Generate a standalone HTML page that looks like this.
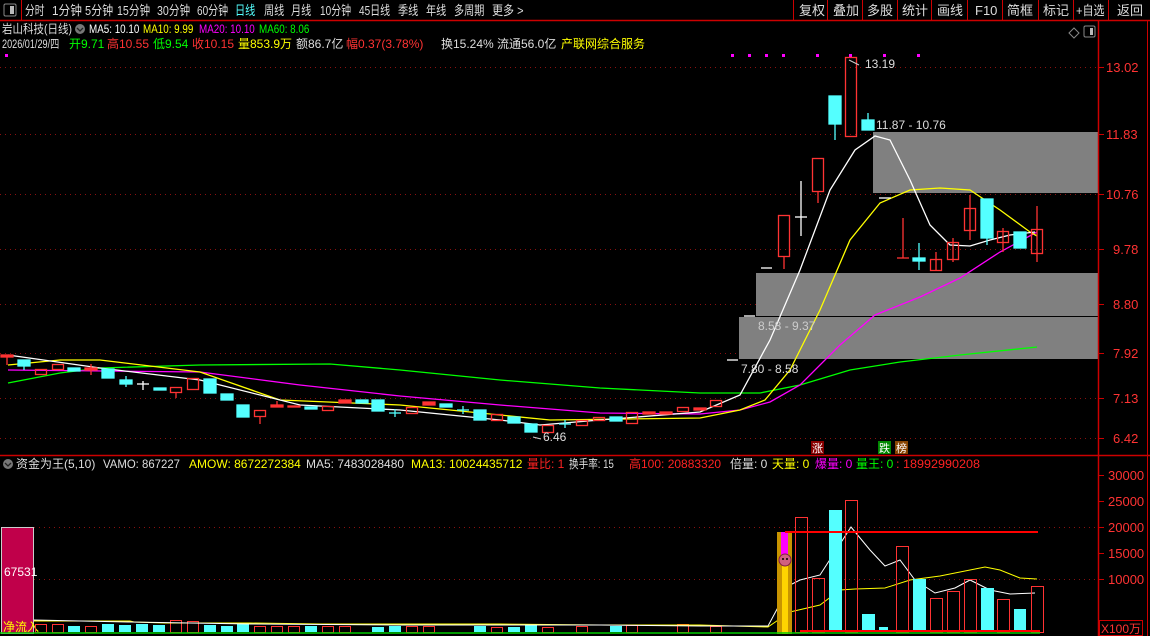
<!DOCTYPE html>
<html><head><meta charset="utf-8"><style>
body{margin:0;background:#000;width:1150px;height:636px;overflow:hidden;font-family:"Liberation Sans","Noto Sans CJK SC",sans-serif}
svg{position:absolute;left:0;top:0}
text{font-family:"Liberation Sans","Noto Sans CJK SC",sans-serif}
</style></head><body>
<svg width="1150" height="636" viewBox="0 0 1150 636">
<rect width="1150" height="636" fill="#000"/>
<!-- toolbar -->
<line x1="0" y1="20.5" x2="1150" y2="20.5" stroke="#c00" stroke-width="1.5"/>
<rect x="4" y="4" width="12" height="12" fill="none" stroke="#888" rx="1.5"/><rect x="10" y="6" width="4" height="8" fill="#bbb"/>
<line x1="21.5" y1="0" x2="21.5" y2="20" stroke="#c00"/>
<g font-size="13" fill="#ddd">
<text transform="translate(25,15) scale(.75,1)">分时</text>
<text transform="translate(52,15) scale(.9,1)">1分钟</text>
<text transform="translate(85,15) scale(.85,1)">5分钟</text>
<text transform="translate(117,15) scale(.82,1)">15分钟</text>
<text transform="translate(157,15) scale(.82,1)">30分钟</text>
<text transform="translate(197,15) scale(.77,1)">60分钟</text>
<text transform="translate(235,15) scale(.78,1)" fill="#5ff">日线</text>
<text transform="translate(264,15) scale(.78,1)">周线</text>
<text transform="translate(291,15) scale(.78,1)">月线</text>
<text transform="translate(320,15) scale(.77,1)">10分钟</text>
<text transform="translate(359,15) scale(.77,1)">45日线</text>
<text transform="translate(398,15) scale(.78,1)">季线</text>
<text transform="translate(426,15) scale(.78,1)">年线</text>
<text transform="translate(454,15) scale(.78,1)">多周期</text>
<text transform="translate(492,15) scale(.85,1)">更多 &gt;</text>
<text x="799" y="15">复权</text><text x="833" y="15">叠加</text><text x="867" y="15">多股</text><text x="902" y="15">统计</text><text x="937" y="15">画线</text><text x="975" y="15">F10</text><text x="1007" y="15">简框</text><text x="1043" y="15">标记</text><text transform="translate(1076,15) scale(.85,1)">+自选</text><text x="1117" y="15">返回</text>
</g>
<g stroke="#c00"><line x1="793.5" y1="0" x2="793.5" y2="20"/><line x1="827.5" y1="0" x2="827.5" y2="20"/><line x1="862.5" y1="0" x2="862.5" y2="20"/><line x1="897.5" y1="0" x2="897.5" y2="20"/><line x1="931.5" y1="0" x2="931.5" y2="20"/><line x1="967.5" y1="0" x2="967.5" y2="20"/><line x1="1002.5" y1="0" x2="1002.5" y2="20"/><line x1="1038.5" y1="0" x2="1038.5" y2="20"/><line x1="1073.5" y1="0" x2="1073.5" y2="20"/><line x1="1108.5" y1="0" x2="1108.5" y2="20"/></g>
<!-- info lines -->
<g font-size="12">
<text transform="translate(2,33) scale(.875,1)" fill="#ddd">岩山科技(日线)</text>
<circle cx="80" cy="29" r="5" fill="#777"/><path d="M77 28 l3 3 l3 -3" stroke="#222" fill="none" stroke-width="1.3"/>
<text transform="translate(89,33) scale(.82,1)" fill="#fff">MA5: 10.10</text>
<text transform="translate(143,33) scale(.82,1)" fill="#ff0">MA10: 9.99</text>
<text transform="translate(199,33) scale(.82,1)" fill="#f0f">MA20: 10.10</text>
<text transform="translate(259,33) scale(.82,1)" fill="#0f0">MA60: 8.06</text>
<text transform="translate(2,48) scale(.76,1)" fill="#ddd">2026/01/29/四</text>
<text x="69" y="48" fill="#0f0">开9.71</text><text x="107" y="48" fill="#f33">高10.55</text><text x="153" y="48" fill="#0f0">低9.54</text><text x="192" y="48" fill="#f33">收10.15</text><text x="238" y="48" fill="#ff0">量853.9万</text><text x="296" y="48" fill="#ddd">额86.7亿</text><text x="346" y="48" fill="#f33">幅0.37(3.78%)</text><text x="441" y="48" fill="#ddd">换15.24%</text><text x="497" y="48" fill="#ddd">流通56.0亿</text><text x="561" y="48" fill="#ff0">产联网综合服务</text>
</g>
<path d="M1069 33 l5 -5 l5 5 l-5 5z" fill="none" stroke="#888"/>
<rect x="1084" y="26" width="11" height="11" fill="none" stroke="#888" rx="1.5"/><rect x="1090" y="28" width="3" height="7" fill="#bbb"/>
<!-- magenta dots -->
<g fill="#f0f"><rect x="5" y="54" width="3" height="3"/><rect x="731" y="54" width="3" height="3"/><rect x="748" y="54" width="3" height="3"/><rect x="765" y="54" width="3" height="3"/><rect x="782" y="54" width="3" height="3"/><rect x="816" y="54" width="3" height="3"/><rect x="849" y="54" width="3" height="3"/><rect x="883" y="54" width="3" height="3"/><rect x="917" y="54" width="3" height="3"/></g>
<!-- gray boxes -->
<rect x="873" y="132" width="225" height="61" fill="#808080"/>
<rect x="756" y="273" width="342" height="43" fill="#808080"/>
<rect x="739" y="317" width="359" height="42" fill="#808080"/>
<line x1="739" y1="316.5" x2="1098" y2="316.5" stroke="#000"/>
<!-- grid -->
<g stroke="#8a1010" stroke-dasharray="1,4"><line x1="0" y1="67.5" x2="1098" y2="67.5"/><line x1="0" y1="134.5" x2="873" y2="134.5"/><line x1="0" y1="194.5" x2="1098" y2="194.5"/><line x1="0" y1="249.5" x2="1098" y2="249.5"/><line x1="0" y1="304.5" x2="756" y2="304.5"/><line x1="0" y1="353.5" x2="739" y2="353.5"/><line x1="0" y1="398.5" x2="1098" y2="398.5"/><line x1="0" y1="438.5" x2="1098" y2="438.5"/></g>
<!-- axis -->
<line x1="1098.5" y1="21" x2="1098.5" y2="636" stroke="#c00" stroke-width="1.5"/>
<line x1="1147.5" y1="21" x2="1147.5" y2="636" stroke="#c00"/>
<g font-size="13" fill="#f33"><text x="1106" y="72">13.02</text><text x="1106" y="139">11.83</text><text x="1106" y="199">10.76</text><text x="1113" y="254">9.78</text><text x="1113" y="309">8.80</text><text x="1113" y="358">7.92</text><text x="1113" y="403">7.13</text><text x="1113" y="443">6.42</text></g>
<g stroke="#c00"><line x1="1098" y1="67.5" x2="1104" y2="67.5"/><line x1="1098" y1="134.5" x2="1104" y2="134.5"/><line x1="1098" y1="194.5" x2="1104" y2="194.5"/><line x1="1098" y1="249.5" x2="1104" y2="249.5"/><line x1="1098" y1="304.5" x2="1104" y2="304.5"/><line x1="1098" y1="353.5" x2="1104" y2="353.5"/><line x1="1098" y1="398.5" x2="1104" y2="398.5"/><line x1="1098" y1="438.5" x2="1104" y2="438.5"/></g>
<!-- MAs -->
<polyline fill="none" stroke="#0f0" stroke-width="1.3" points="8,383 60,373 100,368 200,365 330,364 400,370 500,380 600,388 700,393 760,393 800,385 850,370 900,362 960,355 1037,347"/>
<polyline fill="none" stroke="#f0f" stroke-width="1.3" points="8,370 200,372 300,385 400,396 500,405 600,413 700,414 740,410 770,402 800,385 840,345 875,315 920,297 960,278 1000,252 1037,232"/>
<polyline fill="none" stroke="#ff0" stroke-width="1.3" points="8,365 60,360 100,360 200,372 280,400 400,405 550,420 700,418 740,410 765,400 790,370 820,310 850,240 880,203 910,190 940,188 970,190 1000,210 1030,232 1037,236"/>
<polyline fill="none" stroke="#fff" stroke-width="1.3" points="8,355 100,368 200,380 300,405 400,410 500,420 540,425 600,420 700,412 740,395 770,340 800,270 830,190 855,150 875,136 890,140 910,180 930,225 950,245 970,246 990,240 1010,235 1035,232"/>
<!-- candles -->
<g stroke-width="1.3">
<g stroke="#f33" fill="#f33"><line x1="7" y1="355" x2="7" y2="365"/><rect x="1" y="355" width="12" height="2"/>
<line x1="91" y1="364" x2="91" y2="375"/><rect x="85" y="368" width="12" height="2"/>
<line x1="277" y1="401" x2="277" y2="407"/><rect x="271" y="405" width="12" height="2"/>
<rect x="288" y="406" width="12" height="1"/><rect x="339" y="400" width="12" height="3"/><rect x="423" y="402" width="12" height="3"/>
<rect x="643" y="412" width="12" height="2"/><rect x="660" y="412" width="12" height="2"/><rect x="694" y="408" width="12" height="2"/></g>
<g stroke="#f33" fill="none">
<rect x="35.5" y="369.5" width="11" height="5"/><rect x="52.5" y="364.5" width="11" height="5"/><line x1="176" y1="392" x2="176" y2="398"/><rect x="170.5" y="387.5" width="11" height="5"/><rect x="187.5" y="378.5" width="11" height="11"/>
<line x1="260" y1="416" x2="260" y2="424"/><rect x="254.5" y="410.5" width="11" height="6"/><rect x="322.5" y="406.5" width="11" height="4"/>
<rect x="406.5" y="407.5" width="11" height="6"/><rect x="491.5" y="414.5" width="11" height="6"/><rect x="542.5" y="425.5" width="11" height="7"/><rect x="576.5" y="420.5" width="11" height="5"/><rect x="593.5" y="417.5" width="11" height="3"/><rect x="626.5" y="412.5" width="11" height="11"/><rect x="677.5" y="407.5" width="11" height="4"/><rect x="710.5" y="400.5" width="11" height="6"/>
<line x1="784" y1="256" x2="784" y2="269"/><rect x="778.5" y="215.5" width="11" height="41"/>
<line x1="818" y1="191" x2="818" y2="203"/><rect x="812.5" y="158.5" width="11" height="33"/>
<rect x="845.5" y="57.5" width="11" height="79"/>
<line x1="903" y1="218" x2="903" y2="258"/><line x1="897" y1="258" x2="909" y2="258"/>
<line x1="936" y1="252" x2="936" y2="271"/><rect x="930.5" y="259.5" width="11" height="11"/>
<line x1="953" y1="238" x2="953" y2="262"/><rect x="947.5" y="242.5" width="11" height="17"/>
<line x1="970" y1="195" x2="970" y2="240"/><rect x="964.5" y="208.5" width="11" height="22"/>
<line x1="1003" y1="228" x2="1003" y2="252"/><rect x="997.5" y="231.5" width="11" height="11"/>
<line x1="1037" y1="206" x2="1037" y2="262"/><rect x="1031.5" y="229.5" width="11" height="24"/>
</g>
<g stroke="#54ffff" fill="#54ffff">
<line x1="24" y1="360" x2="24" y2="370"/><rect x="18" y="360" width="12" height="6"/><rect x="68" y="368" width="12" height="3"/><rect x="102" y="369" width="12" height="9"/>
<line x1="126" y1="376" x2="126" y2="387"/><rect x="120" y="380" width="12" height="4"/><rect x="154" y="388" width="12" height="2"/><rect x="204" y="379" width="12" height="14"/><rect x="221" y="394" width="12" height="6"/>
<rect x="237" y="405" width="12" height="12"/><rect x="305" y="407" width="12" height="2"/><rect x="356" y="400" width="12" height="3"/><rect x="372" y="400" width="12" height="11"/>
<line x1="395" y1="409" x2="395" y2="417"/><line x1="389" y1="413" x2="401" y2="413"/>
<rect x="440" y="404" width="12" height="3"/><line x1="463" y1="406" x2="463" y2="414"/><line x1="457" y1="410" x2="469" y2="410"/>
<rect x="474" y="410" width="12" height="10"/><rect x="508" y="417" width="12" height="6"/><rect x="525" y="424" width="12" height="8"/>
<line x1="565" y1="420" x2="565" y2="428"/><line x1="559" y1="424" x2="571" y2="424"/><rect x="610" y="417" width="12" height="4"/>
<line x1="835" y1="96" x2="835" y2="140"/><rect x="829" y="96" width="12" height="28"/>
<line x1="868" y1="113" x2="868" y2="130"/><rect x="862" y="120" width="12" height="10"/>
<line x1="919" y1="243" x2="919" y2="270"/><rect x="913" y="258" width="12" height="3"/>
<line x1="987" y1="199" x2="987" y2="245"/><rect x="981" y="199" width="12" height="39"/>
<rect x="1014" y="232" width="12" height="16"/>
</g>
<g stroke="#fff"><line x1="143" y1="381" x2="143" y2="390"/><line x1="137" y1="384" x2="149" y2="384"/>
<line x1="801" y1="181" x2="801" y2="236"/><line x1="795" y1="217" x2="807" y2="217"/>
<line x1="727" y1="360" x2="738" y2="360"/><line x1="744" y1="316" x2="755" y2="316"/><line x1="761" y1="268" x2="772" y2="268"/><line x1="879" y1="198" x2="891" y2="198"/></g>
</g>
<g font-size="12" fill="#ddd"><text x="865" y="68">13.19</text><text x="876" y="129">11.87 - 10.76</text><text x="758" y="330" fill="#ccc">8.58 - 9.37</text><text x="741" y="373">7.80 - 8.58</text><text x="543" y="441">6.46</text></g>
<path d="M849 60 l10 5 M533 437 l8 2" stroke="#ccc"/>
<g font-size="11"><rect x="811" y="441" width="13" height="13" fill="#800"/><text x="812" y="452" fill="#fff">涨</text><rect x="878" y="441" width="13" height="13" fill="#080"/><text x="879" y="452" fill="#fff">跌</text><rect x="895" y="441" width="13" height="13" fill="#840"/><text x="896" y="452" fill="#fff">榜</text></g>
<!-- bottom panel -->
<line x1="0" y1="455.5" x2="1150" y2="455.5" stroke="#c00" stroke-width="1.5"/>
<circle cx="8" cy="464" r="5" fill="#777"/><path d="M5 463 l3 3 l3 -3" stroke="#222" fill="none" stroke-width="1.3"/>
<g font-size="12">
<text x="16" y="468" fill="#ddd">资金为王(5,10)</text>
<text transform="translate(103,468) scale(.95,1)" fill="#ddd">VAMO: 867227</text>
<text x="189" y="468" fill="#ff0">AMOW: 8672272384</text>
<text x="306" y="468" fill="#ddd">MA5: 7483028480</text>
<text x="411" y="468" fill="#ff0">MA13: 10024435712</text>
<text x="527" y="468" fill="#f22">量比: 1</text>
<text transform="translate(569,468) scale(.8,1)" fill="#ddd">换手率: 15</text>
<text x="629" y="468" fill="#f22">高100: 20883320</text>
<text x="730" y="468" fill="#ddd">倍量: 0</text>
<text x="772" y="468" fill="#ff0">天量: 0</text>
<text x="815" y="468" fill="#f0f">爆量: 0</text>
<text x="856" y="468" fill="#0f0">量王: 0</text>
<text transform="translate(896,468) scale(1.05,1)" fill="#f22">: 18992990208</text></g>
<g stroke="#8a1010" stroke-dasharray="1,4"><line x1="34" y1="527.5" x2="1098" y2="527.5"/><line x1="34" y1="579.5" x2="1098" y2="579.5"/></g>
<g font-size="13" fill="#f33"><text x="1108" y="480">30000</text><text x="1108" y="506">25000</text><text x="1108" y="532">20000</text><text x="1108" y="558">15000</text><text x="1108" y="584">10000</text></g>
<g stroke="#c00"><line x1="1098" y1="475.5" x2="1104" y2="475.5"/><line x1="1098" y1="501.5" x2="1104" y2="501.5"/><line x1="1098" y1="527.5" x2="1104" y2="527.5"/><line x1="1098" y1="553.5" x2="1104" y2="553.5"/><line x1="1098" y1="579.5" x2="1104" y2="579.5"/></g>
<rect x="1099.5" y="620.5" width="43" height="15" fill="none" stroke="#c00"/><text x="1101" y="633" font-size="12" fill="#f33">X100万</text>
<rect x="1.5" y="527.5" width="32" height="106" fill="#c0004a" stroke="#ccc"/>
<text x="4" y="576" font-size="12" fill="#fff">67531</text><text x="3" y="631" font-size="12" fill="#ff0">净流入</text>
<!-- small bars left -->
<g fill="#54ffff"><rect x="68" y="626" width="12" height="6"/><rect x="102" y="624" width="12" height="8"/><rect x="119" y="625" width="12" height="7"/><rect x="136" y="624" width="12" height="8"/><rect x="153" y="625" width="12" height="7"/><rect x="204" y="625" width="12" height="7"/><rect x="221" y="626" width="12" height="6"/><rect x="237" y="624" width="12" height="8"/><rect x="305" y="626" width="12" height="6"/><rect x="372" y="627" width="12" height="5"/><rect x="389" y="626" width="12" height="6"/><rect x="474" y="626" width="12" height="6"/><rect x="508" y="627" width="12" height="5"/><rect x="525" y="624" width="12" height="8"/><rect x="610" y="626" width="12" height="6"/></g>
<g fill="none" stroke="#f33"><rect x="35.5" y="624.5" width="11" height="8"/><rect x="52.5" y="624.5" width="11" height="8"/><rect x="85.5" y="626.5" width="11" height="6"/><rect x="170.5" y="620.5" width="11" height="12"/><rect x="187.5" y="621.5" width="11" height="11"/><rect x="254.5" y="626.5" width="11" height="6"/><rect x="271.5" y="626.5" width="11" height="6"/><rect x="288.5" y="626.5" width="11" height="6"/><rect x="322.5" y="626.5" width="11" height="6"/><rect x="339.5" y="626.5" width="11" height="6"/><rect x="406.5" y="626.5" width="11" height="6"/><rect x="423.5" y="626.5" width="11" height="6"/><rect x="491.5" y="627.5" width="11" height="5"/><rect x="542.5" y="627.5" width="11" height="5"/><rect x="576.5" y="626.5" width="11" height="6"/><rect x="626.5" y="625.5" width="11" height="7"/><rect x="677.5" y="624.5" width="11" height="8"/><rect x="710.5" y="626.5" width="11" height="6"/></g>
<polyline fill="none" stroke="#ff0" points="34,621 130,621 134,622 165,623 250,623 320,624 400,624 500,624 600,625 700,625 768,627 790,612 820,605 840,590 855,589 885,588 910,580 940,576 985,567 1000,570 1020,578 1037,579"/>
<polyline fill="none" stroke="#fff" points="34,620 130,622 250,624 400,625 600,625 700,626 768,626 790,585 800,580 820,575 851,527 870,550 885,566 900,560 915,580 935,593 955,588 970,580 990,590 1010,594 1035,593"/>
<!-- right vol bars -->
<rect x="777" y="532" width="15" height="102" fill="#c89400"/><rect x="782" y="532" width="6" height="102" fill="#ffd400"/><rect x="781" y="532" width="7" height="23" fill="#f0f"/>
<circle cx="785" cy="560" r="6" fill="#d06080" stroke="#802040"/><circle cx="783" cy="559" r="1" fill="#000"/><circle cx="787" cy="559" r="1" fill="#000"/>
<g fill="#54ffff"><rect x="829" y="510" width="13" height="122"/><rect x="862" y="614" width="13" height="18"/><rect x="879" y="627" width="9" height="5"/><rect x="913" y="579" width="13" height="53"/><rect x="981" y="588" width="13" height="44"/><rect x="1014" y="609" width="12" height="23"/></g>
<g fill="none" stroke="#f33"><rect x="795.5" y="517.5" width="12" height="115"/><rect x="812.5" y="578.5" width="12" height="54"/><rect x="845.5" y="500.5" width="12" height="132"/><rect x="896.5" y="546.5" width="12" height="86"/><rect x="930.5" y="598.5" width="12" height="34"/><rect x="947.5" y="591.5" width="12" height="41"/><rect x="964.5" y="579.5" width="12" height="53"/><rect x="997.5" y="599.5" width="12" height="33"/><rect x="1031.5" y="586.5" width="12" height="46"/></g>
<line x1="785" y1="532" x2="1038" y2="532" stroke="#f00" stroke-width="2"/>
<line x1="0" y1="633" x2="1040" y2="633" stroke="#0c0" stroke-width="1.5"/>
<line x1="800" y1="631" x2="1040" y2="631" stroke="#f00" stroke-width="2"/>
</svg>
</body></html>
